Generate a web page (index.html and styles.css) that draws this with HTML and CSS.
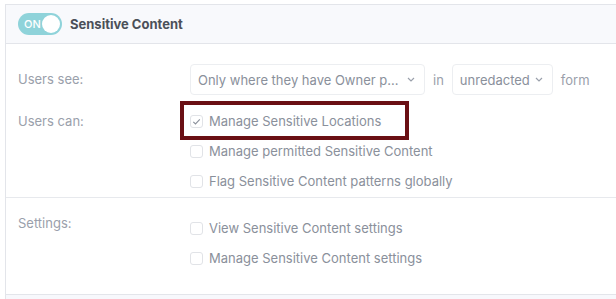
FILE: index.html
```html
<!DOCTYPE html>
<html>
<head>
<meta charset="utf-8">
<link rel="stylesheet" href="styles.css">
</head>
<body>
<div class="panel">
  <div class="panel-head">
    <span class="toggle"><span class="toggle-text">ON</span><span class="knob"></span></span>
    <span class="title">Sensitive Content</span>
  </div>
  <div class="section sec1">
    <div class="label label-see">Users see:</div>
    <div class="controls">
      <span class="select sel-wide">Only where they have Owner p...<svg class="chev" viewBox="0 0 8 5" width="8" height="5"><path d="M1 1l3 3 3-3" fill="none" stroke="#9aa0ab" stroke-width="1.2"/></svg></span>
      <span class="word">in</span>
      <span class="select sel-narrow">unredacted<svg class="chev" viewBox="0 0 8 5" width="8" height="5"><path d="M1 1l3 3 3-3" fill="none" stroke="#9aa0ab" stroke-width="1.2"/></svg></span>
      <span class="word">form</span>
    </div>
    <div class="label label-can">Users can:</div>
    <div class="checks">
      <div class="check highlight"><span class="box checked"><svg viewBox="0 0 13 13" width="13" height="13"><path d="M3.3 6.8l2.2 2.2 4.3-4.6" fill="none" stroke="#8a909b" stroke-width="1.1"/></svg></span>Manage Sensitive Locations</div>
      <div class="check"><span class="box"></span>Manage permitted Sensitive Content</div>
      <div class="check"><span class="box"></span>Flag Sensitive Content patterns globally</div>
    </div>
  </div>
  <div class="section sec2">
    <div class="label label-settings">Settings:</div>
    <div class="checks">
      <div class="check"><span class="box"></span>View Sensitive Content settings</div>
      <div class="check"><span class="box"></span>Manage Sensitive Content settings</div>
    </div>
  </div>
  <div class="panel-foot"></div>
</div>
</body>
</html>
```
FILE: styles.css
```css
html, body {
  margin: 0;
  padding: 0;
  background: #ffffff;
  overflow: hidden;
}
body {
  padding: 4px 0 0 5px;
  font-family: Inter, "Noto Sans", sans-serif;
  font-size: 13px;
  color: #8f95a0;
}
.panel {
  width: 640px;
  border-left: 1px solid #e3e5ea;
  border-top: 1px solid #e3e5ea;
  background: #fff;
}
.panel-head {
  height: 38px;
  background: #f8f9fc;
  border-bottom: 1px solid #e3e5ea;
  display: flex;
  align-items: center;
  padding-left: 12px;
  gap: 8px;
}
.toggle {
  width: 44px;
  height: 22px;
  border-radius: 11px;
  background: #8fd3da;
  display: flex;
  align-items: center;
  justify-content: space-between;
  padding: 0 2px 0 6px;
  box-sizing: border-box;
}
.toggle-text {
  color: #fff;
  font-size: 11px;
  font-weight: 500;
}
.knob {
  width: 18px;
  height: 18px;
  border-radius: 50%;
  background: #fff;
}
.title {
  font-weight: 700;
  font-size: 13px;
  color: #4b5059;
}
.section {
  display: grid;
  grid-template-columns: 172px 1fr;
  padding-left: 12px;
}
.sec1 {
  padding-top: 20px;
  padding-bottom: 1px;
  border-bottom: 1px solid #e7e9ed;
  row-gap: 11px;
}
.sec2 {
  padding-top: 15px;
  height: 97px;
  box-sizing: border-box;
  align-content: start;
  border-bottom: 1px solid #e3e5ea;
}
.label {
  color: #9aa0ab;
}
.label-see {
  line-height: 31px;
}
.label-can {
  line-height: 30px;
}
.label-settings {
  line-height: 20px;
}
.controls {
  display: flex;
  align-items: center;
  height: 31px;
}
.select {
  height: 31px;
  box-sizing: border-box;
  border: 1px solid #eceef1;
  border-radius: 4px;
  display: flex;
  align-items: center;
  justify-content: space-between;
  padding: 0 9px 0 7px;
  color: #8a909b;
}
.sel-wide {
  width: 235px;
}
.sel-narrow {
  width: 101px;
  margin-left: 8px;
}
.word {
  margin-left: 8px;
  color: #9aa0ab;
}
.checks {
  display: flex;
  flex-direction: column;
}
.check {
  height: 30px;
  display: flex;
  align-items: center;
  gap: 6px;
  color: #8a909b;
  position: relative;
}
.box {
  width: 13px;
  height: 13px;
  box-sizing: border-box;
  border: 1px solid #e1e3e7;
  border-radius: 3px;
  background: #fff;
  position: relative;
}
.box svg {
  position: absolute;
  left: -1px;
  top: -1px;
}
.highlight::after {
  content: "";
  position: absolute;
  left: -10px;
  top: -5px;
  width: 229px;
  height: 39px;
  box-sizing: border-box;
  border: 4px solid #6a0f14;
}
.panel-foot {
  height: 10px;
  background: #f7f8fc;
}
```
